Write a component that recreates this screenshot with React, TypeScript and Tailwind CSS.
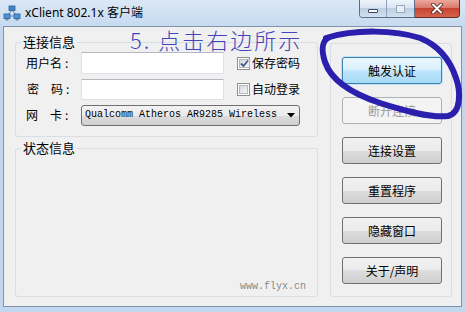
import React from 'react';

const btnBase =
  'h-[27px] w-[100px] rounded-[3px] border text-[12px] flex items-center justify-center';
const btnNormal =
  'border-[#707070] text-black bg-[linear-gradient(#f2f2f2_0%,#ebebeb_50%,#dddddd_50%,#cfcfcf_100%)]';

const NetIcon = () => (
  <svg width="18" height="16" viewBox="0 0 18 16">
    <path d="M9 5 L4 11 M9 5 L14 11 M4 11 L14 11" stroke="#6a88a8" strokeWidth="1" fill="none" />
    <rect x="6" y="1" width="6" height="4.5" fill="#3e86d0" stroke="#2c5c8e" strokeWidth="0.8" />
    <rect x="1" y="9" width="6" height="4.5" fill="#4a94dc" stroke="#2c5c8e" strokeWidth="0.8" />
    <rect x="11" y="9" width="6" height="4.5" fill="#4a94dc" stroke="#2c5c8e" strokeWidth="0.8" />
    <rect x="2.5" y="14" width="3" height="1.5" fill="#7a8a9a" />
    <rect x="12.5" y="14" width="3" height="1.5" fill="#7a8a9a" />
  </svg>
);

const Check = ({ checked }: { checked: boolean }) => (
  <span className="w-[13px] h-[13px] border border-[#8e8f8f] bg-white p-[1px] flex">
    <span className="flex-1 border border-[#b4b6b9] bg-[linear-gradient(135deg,#d6d8dc,#f7f7f7)] flex items-center justify-center">
      {checked && (
        <svg width="9" height="9" viewBox="0 0 9 9">
          <path d="M1 4.5 L3.5 7 L8 1.5" stroke="#3f5a85" strokeWidth="1.8" fill="none" />
        </svg>
      )}
    </span>
  </span>
);

const Label = ({ a, b, wide }: { a: string; b?: string; wide?: boolean }) => (
  <span className={`w-[55px] shrink-0 flex ${wide ? 'pl-[1px]' : ''}`}>
    <span>{a}</span>
    {b && <span className="ml-[12px]">{b}</span>}
    <span className="ml-[3px]">:</span>
  </span>
);

export default function App() {
  const buttons = ['连接设置', '重置程序', '隐藏窗口', '关于/声明'];
  return (
    <div className="w-[465px] h-[312px] relative overflow-hidden bg-[#c2d7ee] flex flex-col font-['Noto_Sans_CJK_SC',sans-serif] text-[12px] text-black">
      {/* title bar */}
      <div className="h-[26px] shrink-0 flex justify-between bg-[linear-gradient(#dbe8f6,#c6daf0)] pl-[3px] pr-[5px]">
        <div className="flex items-center gap-[4px] h-[26px]">
          <NetIcon />
          <span className="text-[12px] font-['Noto_Sans','Noto_Sans_CJK_SC',sans-serif] leading-none">xClient 802.1x 客户端</span>
        </div>
        <div className="flex h-[18px]">
          <div className="flex border border-t-0 border-[#5d6e86] rounded-bl-[4px] overflow-hidden">
            <div className="w-[27px] bg-[linear-gradient(#eef4fa_0%,#d9e5f2_45%,#bccfe5_50%,#d1e1f1_100%)] flex items-end justify-center pb-[4px] border-r border-[#8e9fb6]">
              <span className="w-[10px] h-[4px] bg-white border border-[#3b4a60] rounded-[1px]" />
            </div>
            <div className="w-[27px] bg-[linear-gradient(#eef4fa_0%,#d9e5f2_45%,#bccfe5_50%,#d1e1f1_100%)] flex items-center justify-center">
              <span className="w-[9px] h-[8px] border border-[#9aa8ba] bg-[#e8eef6]" />
            </div>
          </div>
          <div className="w-[45px] border border-t-0 border-l-0 border-[#6b2a22] rounded-br-[4px] bg-[linear-gradient(#eaa99c_0%,#d97a6c_45%,#c7432f_50%,#d6644e_100%)] flex items-center justify-center">
            <svg width="12" height="11" viewBox="0 0 12 11">
              <path d="M2 1.5 L10 9.5 M10 1.5 L2 9.5" stroke="#4a2420" strokeWidth="3.6" strokeLinecap="round" />
              <path d="M2 1.5 L10 9.5 M10 1.5 L2 9.5" stroke="#ffffff" strokeWidth="2" strokeLinecap="round" />
            </svg>
          </div>
        </div>
      </div>

      {/* client area */}
      <div className="mx-[3px] h-[281px] border border-[#7f93ab] bg-[#f0f0f0] flex pl-[11px] pt-[7px] pb-[9px] gap-[12px]">
        <div className="w-[303px] flex flex-col gap-[3px]">
          <fieldset className="border border-[#d5dfe5] rounded-[3px] pt-[2px] pb-[10px]">
            <legend className="ml-[5px] px-[2px] text-[13px] leading-[16px]">连接信息</legend>
            <div className="flex flex-col gap-[4px] pl-[10px]">
              <div className="h-[22px] flex items-center">
                <Label a="用户名" />
                <span className="w-[143px] h-[22px] bg-white border border-[#dde1e6] border-t-[#b5b9c0]" />
                <span className="ml-[13px] flex items-center gap-[2px]">
                  <Check checked />
                  <span>保存密码</span>
                </span>
              </div>
              <div className="h-[22px] flex items-center">
                <Label a="密" b="码" wide />
                <span className="w-[143px] h-[21px] bg-white border border-[#dde1e6] border-t-[#b5b9c0]" />
                <span className="ml-[13px] flex items-center gap-[2px]">
                  <Check checked={false} />
                  <span>自动登录</span>
                </span>
              </div>
              <div className="h-[22px] flex items-center">
                <Label a="网" b="卡" />
                <span className="w-[219px] h-[21px] rounded-[3px] border border-[#707070] bg-[linear-gradient(#f2f2f2_0%,#ebebeb_50%,#dddddd_50%,#cfcfcf_100%)] flex items-center pl-[3px] pr-[4px]">
                  <span className="flex-1 font-['Liberation_Mono',monospace] text-[10px] leading-none">Qualcomm Atheros AR9285 Wireless</span>
                  <svg width="8" height="5" viewBox="0 0 8 5">
                    <path d="M0 0 L8 0 L4 4.5 Z" fill="#000" />
                  </svg>
                </span>
              </div>
            </div>
          </fieldset>
          <fieldset className="flex-1 flex flex-col border border-[#d5dfe5] rounded-[3px] pr-[11px] pb-[2px]">
            <legend className="ml-[5px] px-[2px] text-[13px] leading-[16px]">状态信息</legend>
            <div className="flex-1 flex items-end justify-end">
              <span className="font-['Liberation_Mono',monospace] text-[10px] text-[#8a8a8a] leading-[14px]">www.flyx.cn</span>
            </div>
          </fieldset>
        </div>

        <div className="mt-[9px] w-[122px] border border-[#d5dfe5] rounded-[3px] pl-[11px] pt-[13px] flex flex-col gap-[13px]">
          <div className={`${btnBase} border-[#3c7fb1] shadow-[0_0_0_1px_#bfe2f7] bg-[linear-gradient(#eaf6fd_0%,#d9f0fc_50%,#bee6fd_50%,#a7d9f5_100%)]`}>
            触发认证
          </div>
          <div className={`${btnBase} border-[#adb2b5] bg-[#f4f4f4] text-[#9a9a9a]`}>断开连接</div>
          {buttons.map((b) => (
            <div key={b} className={`${btnBase} ${btnNormal}`}>
              {b}
            </div>
          ))}
        </div>
      </div>
      <div className="flex-1" />

      {/* annotation overlay */}
      <span className="absolute left-[130px] top-[28px] text-[22px] leading-[22px] tracking-[2px] text-[#4444b8] font-light pointer-events-none">
        5. 点击右边所示
      </span>
      <svg className="absolute left-0 top-0 pointer-events-none" width="465" height="312" viewBox="0 0 465 312">
        <path
          d="M330 37 C322 40, 321 50, 325 62 C331 80, 350 93, 380 103 C405 111, 430 118, 448 116 C461 113, 461 92, 456 78 C450 60, 440 46, 420 38 C395 30, 355 29, 326 38"
          stroke="#2b1fae"
          strokeWidth="6"
          fill="none"
          strokeLinecap="round"
          strokeLinejoin="round"
        />
      </svg>
    </div>
  );
}
